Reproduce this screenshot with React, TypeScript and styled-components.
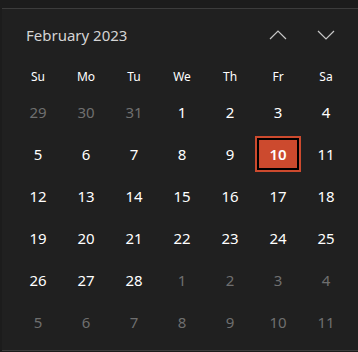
import React from "react";
import styled, { createGlobalStyle } from "styled-components";

const GlobalStyle = createGlobalStyle`
  html, body {
    margin: 0;
    padding: 0;
    background: #1c1c1c;
  }
  body {
    font-family: "Noto Sans", "Open Sans", sans-serif;
  }
`;

const Panel = styled.div`
  margin: 8px 0 0 2px;
  width: 356px;
  background-color: #202020;
  border-top: 1px solid #3c3c3c;
  border-bottom: 1px solid #3c3c3c;
  padding: 0 8px 7px 12px;
  box-sizing: border-box;
`;

const Header = styled.div`
  display: flex;
  align-items: center;
  height: 52px;
`;

const Title = styled.div`
  flex: 1;
  padding-left: 12px;
  font-size: 15px;
  color: #d4d4d4;
`;

const NavButton = styled.button`
  width: 48px;
  height: 40px;
  display: flex;
  align-items: center;
  justify-content: center;
  background: none;
  border: none;
  padding: 0;
  color: #c8c8c8;
`;

const Grid = styled.div`
  display: grid;
  grid-template-columns: repeat(7, 48px);
`;

const WeekDay = styled.div`
  height: 30px;
  display: flex;
  align-items: center;
  justify-content: center;
  font-size: 12px;
  color: #ffffff;
`;

const DayCell = styled.div<{ $muted?: boolean }>`
  height: 42px;
  display: flex;
  align-items: center;
  justify-content: center;
  font-size: 15px;
  color: ${({ $muted }) => ($muted ? "#6f6f6f" : "#ffffff")};
`;

const Selected = styled.div`
  width: 46px;
  height: 36px;
  box-sizing: border-box;
  display: flex;
  align-items: center;
  justify-content: center;
  background-color: #cc4a2e;
  border: 2px solid #cc4a2e;
  box-shadow: inset 0 0 0 2px #000000;
  font-weight: 600;
  color: #ffffff;
`;

const Chevron = ({ up }: { up?: boolean }) => (
  <svg width="18" height="10" viewBox="0 0 18 10" fill="none">
    <path
      d={up ? "M1 9 L9 1 L17 9" : "M1 1 L9 9 L17 1"}
      stroke="currentColor"
      strokeWidth="1.2"
    />
  </svg>
);

const weekDays = ["Su", "Mo", "Tu", "We", "Th", "Fr", "Sa"];

type Day = { n: number; muted?: boolean; selected?: boolean };

const buildDays = (): Day[] => {
  const days: Day[] = [];
  [29, 30, 31].forEach((n) => days.push({ n, muted: true }));
  for (let n = 1; n <= 28; n++) days.push({ n, selected: n === 10 });
  for (let n = 1; n <= 11; n++) days.push({ n, muted: true });
  return days;
};

export default function App() {
  const days = buildDays();
  return (
    <>
      <GlobalStyle />
      <Panel>
        <Header>
          <Title>February 2023</Title>
          <NavButton>
            <Chevron up />
          </NavButton>
          <NavButton>
            <Chevron />
          </NavButton>
        </Header>
        <Grid>
          {weekDays.map((d) => (
            <WeekDay key={d}>{d}</WeekDay>
          ))}
        </Grid>
        <Grid>
          {days.map((d, i) => (
            <DayCell key={i} $muted={d.muted}>
              {d.selected ? <Selected>{d.n}</Selected> : d.n}
            </DayCell>
          ))}
        </Grid>
      </Panel>
    </>
  );
}
